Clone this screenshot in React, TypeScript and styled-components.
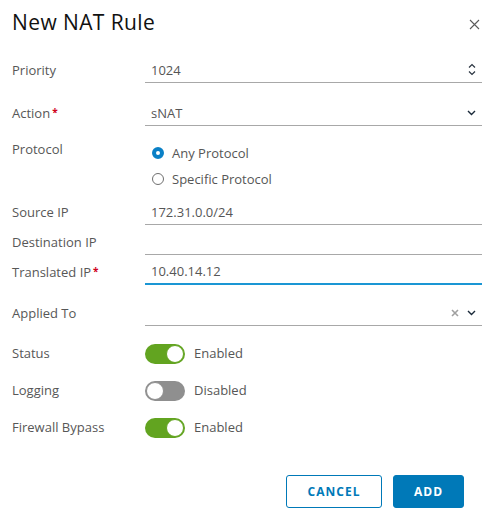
import React, { useState } from "react";
import styled, { createGlobalStyle } from "styled-components";

const GlobalStyle = createGlobalStyle`
  html, body {
    margin: 0;
    padding: 0;
    background: #ffffff;
    font-family: "Open Sans", "Liberation Sans", sans-serif;
  }
`;

const Dialog = styled.div`
  width: 485px;
  height: 530px;
  box-sizing: border-box;
  padding: 8px 3px 0 12px;
  display: flex;
  flex-direction: column;
`;

const Header = styled.div`
  display: flex;
  align-items: center;
  justify-content: space-between;
  height: 28px;
`;

const Title = styled.h3`
  margin: 0;
  font-size: 21px;
  font-weight: 400;
  color: #111111;
  letter-spacing: 0.4px;
`;

const CloseButton = styled.button`
  border: none;
  background: none;
  padding: 0;
  width: 12px;
  height: 12px;
  margin-top: 6px;
  margin-right: 1px;
  display: flex;
  cursor: pointer;
`;

const Form = styled.div`
  display: flex;
  flex-direction: column;
  margin-top: 23px;
`;

const Row = styled.div<{ $gap: number; $align?: string }>`
  display: grid;
  grid-template-columns: 133px 1fr;
  align-items: ${(p) => p.$align || "center"};
  margin-top: ${(p) => p.$gap}px;
`;

const Label = styled.label`
  font-size: 13px;
  color: #575757;
  padding-bottom: 2px;
`;

const Required = styled.span`
  color: #d0021b;
  font-size: 10px;
  font-weight: 700;
  margin-left: 2px;
  vertical-align: 2px;
`;

const Field = styled.div<{ $focused?: boolean }>`
  height: 24px;
  box-sizing: border-box;
  display: flex;
  align-items: center;
  border-bottom: ${(p) => (p.$focused ? "2px solid #1a96d4" : "1px solid #a8a8a8")};
  padding: 0 6px 2px 6px;
  color: #565656;
  font-size: 13px;
`;

const Value = styled.span`
  flex: 1;
`;

const Icons = styled.span`
  display: flex;
  align-items: center;
  gap: 8px;
`;

const RadioGroup = styled.div`
  display: flex;
  flex-direction: column;
  gap: 6px;
  padding: 3px 0 0 7px;
`;

const RadioOption = styled.label`
  display: flex;
  align-items: center;
  gap: 8px;
  height: 20px;
  font-size: 13px;
  color: #565656;
`;

const RadioDot = styled.span<{ $checked: boolean }>`
  width: 12px;
  height: 12px;
  box-sizing: border-box;
  border-radius: 50%;
  border: ${(p) => (p.$checked ? "4px solid #0a80c6" : "1px solid #6f6f6f")};
  background: #fff;
`;

const ToggleWrap = styled.div`
  display: flex;
  align-items: center;
  gap: 9px;
`;

const Track = styled.button<{ $on: boolean }>`
  width: 40px;
  height: 20px;
  border-radius: 10px;
  border: none;
  padding: 0;
  cursor: pointer;
  background: ${(p) => (p.$on ? "#62a420" : "#8f8f8f")};
  position: relative;
`;

const Knob = styled.span<{ $on: boolean }>`
  position: absolute;
  top: 1px;
  left: ${(p) => (p.$on ? "21px" : "1px")};
  width: 18px;
  height: 18px;
  box-sizing: border-box;
  border-radius: 50%;
  background: #fff;
  border: 1px solid ${(p) => (p.$on ? "#62a420" : "#8f8f8f")};
`;

const ToggleText = styled.span`
  font-size: 13px;
  color: #565656;
  margin-top: -2px;
`;

const Footer = styled.div`
  display: flex;
  justify-content: flex-end;
  gap: 11px;
  margin-top: 37px;
  padding-right: 18px;
`;

const Button = styled.button<{ $primary?: boolean }>`
  height: 33px;
  box-sizing: border-box;
  border-radius: 3px;
  border: 1px solid #0079b8;
  background: ${(p) => (p.$primary ? "#0079b8" : "#ffffff")};
  color: ${(p) => (p.$primary ? "#ffffff" : "#0079b8")};
  font-family: "Open Sans", "Liberation Sans", sans-serif;
  font-size: 12px;
  font-weight: 700;
  letter-spacing: 1px;
  padding: 0;
  width: ${(p) => (p.$primary ? "71px" : "96px")};
  cursor: pointer;
`;

const Chevron = () => (
  <svg width="9" height="6" viewBox="0 0 9 6">
    <path d="M1 1l3.5 3.5L8 1" fill="none" stroke="#1b2a3a" strokeWidth="1.4" />
  </svg>
);

const Spinner = () => (
  <svg width="8" height="13" viewBox="0 0 8 13">
    <path d="M1 4.5L4 1.5l3 3M1 8.5l3 3 3-3" fill="none" stroke="#2a3440" strokeWidth="1.2" />
  </svg>
);

const ClearX = () => (
  <svg width="8" height="8" viewBox="0 0 8 8">
    <path d="M1 1l6 6M7 1L1 7" stroke="#a0a0a0" strokeWidth="1.6" />
  </svg>
);

const Toggle = ({ on, onChange }: { on: boolean; onChange: () => void }) => (
  <ToggleWrap>
    <Track $on={on} onClick={onChange}>
      <Knob $on={on} />
    </Track>
    <ToggleText>{on ? "Enabled" : "Disabled"}</ToggleText>
  </ToggleWrap>
);

const App = () => {
  const [protocol, setProtocol] = useState("any");
  const [status, setStatus] = useState(true);
  const [logging, setLogging] = useState(false);
  const [bypass, setBypass] = useState(true);

  return (
    <Dialog>
      <GlobalStyle />
      <Header>
        <Title>New NAT Rule</Title>
        <CloseButton aria-label="close">
          <svg width="11" height="11" viewBox="0 0 11 11">
            <path d="M1 1l9 9M10 1L1 10" stroke="#5b5b5b" strokeWidth="1.1" />
          </svg>
        </CloseButton>
      </Header>

      <Form>
        <Row $gap={0}>
          <Label>Priority</Label>
          <Field>
            <Value>1024</Value>
            <Icons>
              <Spinner />
            </Icons>
          </Field>
        </Row>

        <Row $gap={19}>
          <Label>
            Action<Required>*</Required>
          </Label>
          <Field>
            <Value>sNAT</Value>
            <Icons>
              <Chevron />
            </Icons>
          </Field>
        </Row>

        <Row $gap={14} $align="start">
          <Label>Protocol</Label>
          <RadioGroup>
            <RadioOption onClick={() => setProtocol("any")}>
              <RadioDot $checked={protocol === "any"} />
              Any Protocol
            </RadioOption>
            <RadioOption onClick={() => setProtocol("specific")}>
              <RadioDot $checked={protocol === "specific"} />
              Specific Protocol
            </RadioOption>
          </RadioGroup>
        </Row>

        <Row $gap={12}>
          <Label>Source IP</Label>
          <Field>
            <Value>172.31.0.0/24</Value>
          </Field>
        </Row>

        <Row $gap={6}>
          <Label>Destination IP</Label>
          <Field>
            <Value />
          </Field>
        </Row>

        <Row $gap={6}>
          <Label>
            Translated IP<Required>*</Required>
          </Label>
          <Field $focused>
            <Value>10.40.14.12</Value>
          </Field>
        </Row>

        <Row $gap={17}>
          <Label>Applied To</Label>
          <Field>
            <Value />
            <Icons>
              <ClearX />
              <Chevron />
            </Icons>
          </Field>
        </Row>

        <Row $gap={18}>
          <Label>Status</Label>
          <Toggle on={status} onChange={() => setStatus(!status)} />
        </Row>

        <Row $gap={17}>
          <Label>Logging</Label>
          <Toggle on={logging} onChange={() => setLogging(!logging)} />
        </Row>

        <Row $gap={17}>
          <Label>Firewall Bypass</Label>
          <Toggle on={bypass} onChange={() => setBypass(!bypass)} />
        </Row>
      </Form>

      <Footer>
        <Button>CANCEL</Button>
        <Button $primary>ADD</Button>
      </Footer>
    </Dialog>
  );
};

export default App;
